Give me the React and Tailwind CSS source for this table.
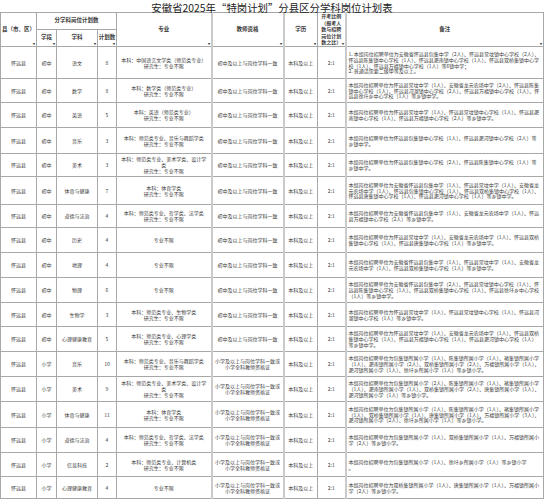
import React from 'react';

const JZ = ['初中及以上与岗位学科一致'];
const XZ = ['小学及以上与岗位学科一致或', '小学全科教师资格证'];
const ANY = ['专业不限'];

const rows = [
  { st: '初中', sub: '语文', n: 8, h: 32, major: ['本科：中国语言文学类（师范类专业）', '研究生：专业不限'],
    note: ['1. 本组岗位招聘单位为安徽省怀远县包集中学（2人）、怀远县常坟镇中心学校（2人）、怀远县陈集镇中心学校（1人）、怀远县淝南镇中心学校（1人）、怀远县双桥集镇中心学校（1人）、怀远县万福镇中心学校（1人）等6镇中学；', '2. 普通话需要二级甲等及以上。'] },
  { st: '初中', sub: '数学', n: 8, h: 24, major: ['本科：数学类（师范类专业）', '研究生：专业不限'],
    note: ['本组岗位招聘单位为怀远县常坟中学（1人）、安徽省龙元农场中学（2人）、怀远县陈集镇中心学校（1人）、怀远县河溜镇中心学校（2人）、怀远县万福镇中心学校（1人）、怀远县徐圩乡中心学校（1人）等乡镇中学。'] },
  { st: '初中', sub: '英语', n: 5, h: 25, major: ['本科：英语（师范类专业）', '研究生：专业不限'],
    note: ['本组岗位招聘单位为怀远县常坟中学（1人）、怀远县常坟镇中心学校（1人）、怀远县淝南镇中心学校（1人）、怀远县万福镇中心学校（2人）等乡镇中学。'] },
  { st: '初中', sub: '音乐', n: 3, h: 26, major: ['本科：师范类专业、音乐与舞蹈学类', '研究生：专业不限'],
    note: ['本组岗位招聘单位为怀远县包集镇中心学校（1人）、怀远县淝河镇中心学校（2人）等乡镇中学。'] },
  { st: '初中', sub: '美术', n: 3, h: 23, major: ['本科：师范类专业、美术学类、设计学', '类', '研究生：专业不限'],
    note: ['本组岗位招聘单位为怀远县包集镇中心学校（2人）、怀远县陈集镇中心学校（1人）等乡镇中学。'] },
  { st: '初中', sub: '体育与健康', n: 7, h: 28, major: ['本科：体育学类', '研究生：专业不限'],
    note: ['本组岗位招聘单位为安徽省怀远县包集中学（1人）、怀远县常坟中学（1人）、安徽省龙元农场中学（1人）、怀远县包集镇中心学校（1人）、怀远县双桥集镇中心学校（1人）、怀远县唐集镇中心学校（1人）、怀远县淝河镇中心学校（1人）等乡镇中学。'] },
  { st: '初中', sub: '道德与法治', n: 4, h: 23, major: ['本科：师范类专业、哲学类、法学类', '研究生：专业不限'],
    note: ['本组岗位招聘单位为安徽省怀远县包集中学（1人）、安徽省龙元农场中学（1人）、怀远县万福镇中心学校（2人）等乡镇中学。'] },
  { st: '初中', sub: '历史', n: 4, h: 25, major: ANY,
    note: ['本组岗位招聘单位为怀远县常坟中学（1人）、安徽省龙元农场中学（1人）、怀远县双桥集镇中心学校（1人）、怀远县唐集镇中心学校（1人）等乡镇中学。'] },
  { st: '初中', sub: '地理', n: 4, h: 25, major: ANY,
    note: ['本组岗位招聘单位为安徽省怀远县包集中学（1人）、怀远县常坟中学（1人）、安徽省龙元农场中学（1人）、怀远县双桥集镇中心学校（1人）等乡镇中学。'] },
  { st: '初中', sub: '物理', n: 6, h: 25, major: ANY,
    note: ['本组岗位招聘单位为安徽省怀远县包集中学（2人）、怀远县常坟镇中心学校（1人）、怀远县陈集镇中心学校（1人）、怀远县双桥集镇中心学校（1人）、怀远县徐圩乡中心学校（1人）等乡镇中学。'] },
  { st: '初中', sub: '生物学', n: 3, h: 24, major: ['本科：师范类专业、生物学类', '研究生：专业不限'],
    note: ['本组岗位招聘单位为怀远县常坟中学（1人）、怀远县常坟镇中心学校（1人）、怀远县河溜镇中心学校（1人）等乡镇中学。'] },
  { st: '初中', sub: '心理健康教育', n: 5, h: 25, major: ['本科：师范类专业、心理学类', '研究生：专业不限'],
    note: ['本组岗位招聘单位为怀远县常坟中学（1人）、安徽省龙元农场中学（1人）、怀远县双桥集镇中心学校（1人）、怀远县万福镇中心学校（1人）、怀远县淝河镇中心学校（1人）等乡镇中学。'] },
  { st: '小学', sub: '音乐', n: 10, h: 25, major: ['本科：师范类专业、音乐与舞蹈学类', '研究生：专业不限'],
    note: ['本组岗位招聘单位为包集镇所属小学（1人）、陈集镇所属小学（1人）、褚集镇所属小学（1人）、淝南镇所属小学（2人）、双桥集镇所属小学（2人）、万福镇所属小学（1人）、淝河镇所属小学（1人）、徐圩乡所属小学（1人）等乡镇小学。'] },
  { st: '小学', sub: '美术', n: 9, h: 25, major: ['本科：师范类专业、美术学类、设计学', '类', '研究生：专业不限'],
    note: ['本组岗位招聘单位为包集镇所属小学（2人）、陈集镇所属小学（1人）、褚集镇所属小学（1人）、淝南镇所属小学（1人）、双桥集镇所属小学（2人）、唐集镇所属小学（1人）、淝河镇所属小学（1人）等乡镇小学。'] },
  { st: '小学', sub: '体育与健康', n: 11, h: 26, major: ['本科：体育学类', '研究生：专业不限'],
    note: ['本组岗位招聘单位为包集镇所属小学（1人）、陈集镇所属小学（1人）、褚集镇所属小学（1人）、双桥集镇所属小学（1人）、唐集镇所属小学（1人）、万福镇所属小学（3人）、淝河镇所属小学（2人）、徐圩乡所属小学（1人）等乡镇小学。'] },
  { st: '小学', sub: '道德与法治', n: 4, h: 25, major: ['本科：师范类专业、哲学类、法学类', '研究生：专业不限'],
    note: ['本组岗位招聘单位为包集镇所属小学（1人）、双桥集镇所属小学（1人）、万福镇所属小学（2人）等乡镇小学。'] },
  { st: '小学', sub: '信息科技', n: 2, h: 24, major: ['本科：师范类专业、计算机类', '研究生：专业不限'],
    note: ['本组岗位招聘单位为包集镇所属小学（1人）、徐圩乡所属小学（1人）等乡镇小学', '。'] },
  { st: '小学', sub: '心理健康教育', n: 4, h: 22, major: ANY,
    note: ['本组岗位招聘单位为双桥集镇所属小学（1人）、唐集镇所属小学（1人）、万福镇所属小学（2人）等乡镇小学。'] },
];

const cell = 'border border-[#a8a8a8] text-center align-middle p-0';
const thick = 'border-r-2 border-r-[#cacaca]';

function Arrow() {
  return <span className="absolute right-[1px] bottom-[1px] text-[4px] leading-none text-[#444]">▾</span>;
}

function Lines({ items }) {
  return items.map((t, i) => <div key={i}>{t}</div>);
}

export default function App() {
  return (
    <div className="w-[544px] h-[500px] overflow-hidden bg-white text-[#3a3a3a]" style={{ fontFamily: '"Noto Sans CJK SC", "Noto Sans", sans-serif' }}>
      <div className="h-[12px] pt-[2.5px] text-center text-[10.4px] leading-[10px] text-[#222]">
        安徽省2025年“特岗计划”分县区分学科岗位计划表
      </div>
      <table className="w-[543px] table-fixed border-collapse text-[5px] leading-[5.8px]">
        <colgroup>
          <col className="w-[36px]" />
          <col className="w-[20px]" />
          <col className="w-[41px]" />
          <col className="w-[19px]" />
          <col className="w-[95px]" />
          <col className="w-[72px]" />
          <col className="w-[34px]" />
          <col className="w-[28px]" />
          <col className="w-[198px]" />
        </colgroup>
        <thead className="font-bold text-[5.5px]">
          <tr className="h-[17px]">
            <th rowSpan={2} className={`${cell} relative`}>县（市、区）<Arrow /></th>
            <th colSpan={3} className={cell}>分学科岗位计划数</th>
            <th rowSpan={2} className={`${cell} ${thick} relative`}>专业<Arrow /></th>
            <th rowSpan={2} className={`${cell} ${thick} relative`}>教师资格<Arrow /></th>
            <th rowSpan={2} className={`${cell} relative`}>学历<Arrow /></th>
            <th rowSpan={2} className={`${cell} ${thick} relative text-[5px] leading-[6.6px]`}>
              <div>开考比例</div><div>（报考人</div><div>数与招聘</div><div>岗位计划</div><div>数之比）</div><Arrow />
            </th>
            <th rowSpan={2} className={`${cell} relative`}>备注<Arrow /></th>
          </tr>
          <tr className="h-[17px]">
            <th className={`${cell} relative`}>学段<Arrow /></th>
            <th className={`${cell} relative`}>学科<Arrow /></th>
            <th className={`${cell} relative`}>计划数<Arrow /></th>
          </tr>
        </thead>
        <tbody>
          {rows.map((r, i) => (
            <tr key={i} style={{ height: r.h }}>
              <td className={cell}>怀远县</td>
              <td className={cell}>{r.st}</td>
              <td className={cell}>{r.sub}</td>
              <td className={cell}>{r.n}</td>
              <td className={`${cell} ${thick}`}><Lines items={r.major} /></td>
              <td className={`${cell} ${thick}`}><Lines items={r.st === '初中' ? JZ : XZ} /></td>
              <td className={cell}>本科及以上</td>
              <td className={`${cell} ${thick}`}>2:1</td>
              <td className={`${cell} text-left px-[2px]`}><Lines items={r.note} /></td>
            </tr>
          ))}
        </tbody>
      </table>
    </div>
  );
}
